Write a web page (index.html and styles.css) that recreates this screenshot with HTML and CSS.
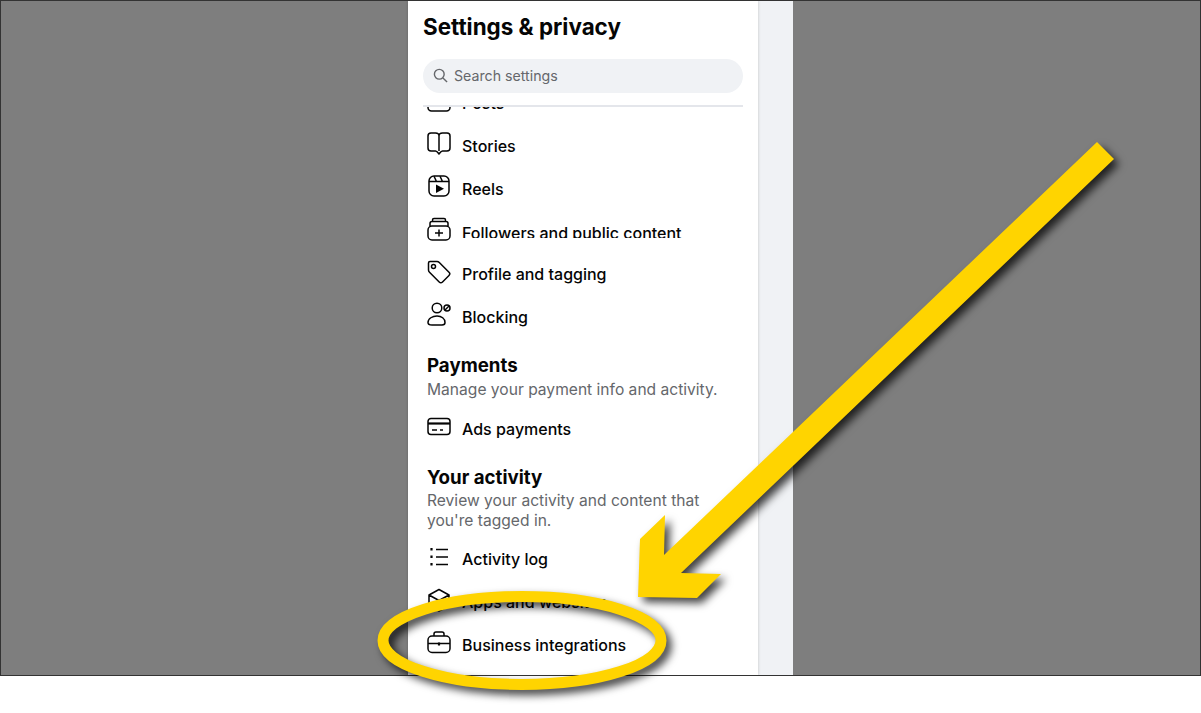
FILE: index.html
```html
<!DOCTYPE html>
<html lang="en">
<head>
    <meta charset="UTF-8">
    <title>Settings &amp; privacy</title>
    <link rel="stylesheet" href="styles.css">
</head>
<body>
    <div class="page">
        <div class="shot">
            <div class="phone">
                <div class="panel">
                    <!-- Fixed header -->
                    <div class="panel-head">
                        <h1>Settings &amp; privacy</h1>
                        <div class="search">
                            <svg class="search-icon" viewBox="0 0 16 16"><circle cx="6.7" cy="6.7" r="5.2"/><path d="M10.6 10.6 15 15"/></svg>
                            <span>Search settings</span>
                        </div>
                        <div class="divider"></div>
                    </div>

                    <!-- Scrolled list -->
                    <div class="list">
                        <div class="row first-row">
                            <svg class="icon" viewBox="0 0 24 24"><rect x="1" y="2" width="22" height="20" rx="3.5"/></svg>
                            <span>Posts</span>
                        </div>
                        <div class="row">
                            <svg class="icon" viewBox="0 0 24 24"><path d="M12 5C12 3 10.500 2 8.500 2H4C2 2 1 3 1 5V17C1 19 2 20 4 20H8.500C10 20 10.500 21 12 23C13.500 21 14 20 15.500 20H20C22 20 23 19 23 17V5C23 3 22 2 20 2H15.500C13.500 2 12 3 12 5V20"/></svg>
                            <span>Stories</span>
                        </div>
                        <div class="row">
                            <svg class="icon" viewBox="0 0 24 24"><rect x="2" y="2" width="20" height="20" rx="5"/><path d="M2 7.500H22M7 2.200 9.500 7.500M13 2.200 15.500 7.500"/><path class="solid" d="M9 10.500 17 14.700 9 19Z"/></svg>
                            <span>Reels</span>
                        </div>
                        <div class="row">
                            <svg class="icon" viewBox="0 0 24 24"><rect x="1" y="9" width="22" height="14" rx="4"/><path d="M3 9V6.500C3 5 4 4.500 5 4.500H19C20 4.500 21 5 21 6.500V9M5.500 4.500V3C5.500 2 6 1.500 7 1.500H17C18 1.500 18.500 2 18.500 3V4.500M12 12.500V19.500M8 16H16"/></svg>
                            <span class="cut-text">Followers and public content</span>
                        </div>
                        <div class="row">
                            <svg class="icon" viewBox="0 0 24 24"><path d="M3 1.500H10C11 1.500 11.700 1.900 12.300 2.500L22 12.200C23 13.200 23 14.500 22 15.500L15.500 22C14.500 23 13.200 23 12.200 22L2.500 12.300C1.900 11.700 1.500 11 1.500 10V3C1.500 2 2 1.500 3 1.500Z"/><circle cx="6.500" cy="6.500" r="2"/></svg>
                            <span>Profile and tagging</span>
                        </div>
                        <div class="row">
                            <svg class="icon" viewBox="0 0 24 24"><circle cx="10" cy="6" r="4.800"/><path d="M5 23H15C17 23 18 22 18 20.500C18 16.500 14.500 14 10 14C5.500 14 1 16.500 1 20.500C1 22 3 23 5 23Z"/><circle cx="20" cy="6" r="3"/><path d="M18 8 22 4"/></svg>
                            <span>Blocking</span>
                        </div>

                        <h2 class="section-title">Payments</h2>
                        <p class="section-note">Manage your payment info and activity.</p>
                        <div class="row ads-row">
                            <svg class="icon" viewBox="0 0 24 24"><rect x="1" y="3.500" width="22" height="16" rx="3"/><path class="thick" d="M1 8.500H23"/><path d="M5 15H10M13 15H16"/></svg>
                            <span>Ads payments</span>
                        </div>

                        <h2 class="section-title">Your activity</h2>
                        <p class="section-note">Review your activity and content that you're tagged in.</p>
                        <div class="row log-row">
                            <svg class="icon" viewBox="0 0 24 24"><path class="thick" d="M4.500 3V5.500M4.500 10.500V13M4.500 18V20.500"/><path d="M9 4.500H21M9 12H21M9 19.500H21"/></svg>
                            <span>Activity log</span>
                        </div>
                        <div class="row">
                            <svg class="icon" viewBox="0 0 24 24"><path d="M12 1.500 22 7V18L12 23 2 18V7ZM2 7 12 12.500 22 7M12 12.500V23"/></svg>
                            <span>Apps and websites</span>
                        </div>
                        <div class="row">
                            <svg class="icon" viewBox="0 0 24 24"><rect x="1" y="6" width="22" height="16.500" rx="4"/><path d="M7 6V4C7 2.800 7.800 2 9 2H15C16.200 2 17 2.800 17 4V6M1 13.500H23"/><path class="thick" d="M12 12.500V15.500"/></svg>
                            <span>Business integrations</span>
                        </div>
                    </div>
                </div>
                <div class="gutter"></div>
            </div>
        </div>

        <!-- Arrow and ring drawn on top of the screenshot -->
        <svg class="markup" viewBox="0 0 1201 713">
            <ellipse class="ring" cx="522" cy="640.500" rx="139" ry="44"/>
            <polygon class="arrow" points="1097,142 1114,159 681,573 721,574 697,598 638,597 640,539 665,515 664,555"/>
        </svg>
    </div>
</body>
</html>
```

FILE: styles.css
```css
html, body {
    margin: 0;
    height: 100%;
    overflow: hidden;
    background-color: white;
}

* {
    box-sizing: border-box;
}

.page {
    position: relative;
    height: 713px;
    font-family: Inter, "Liberation Sans", sans-serif;
    color: #050505;
}

.shot {
    height: 676px;
    border: 1px solid #333;
    background-color: #7e7e7e;
    display: flex;
    justify-content: center;
    overflow: hidden;
}

.phone {
    width: 385px;
    display: flex;
    background-color: #f0f2f5;
}

.panel {
    width: 350px;
    background-color: white;
    box-shadow: 0 0 3px rgba(0, 0, 0, 0.2);
    display: flex;
    flex-direction: column;
}

.gutter {
    flex: 1;
}

/* Header */
.panel-head {
    padding: 12px 15px 0;
}

.panel-head h1 {
    margin: 0;
    font-size: 22.4px;
    line-height: 28px;
    font-weight: 700;
}

.search {
    margin-top: 18px;
    height: 34px;
    border-radius: 17px;
    background-color: #f0f2f5;
    color: #65676b;
    font-size: 14.2px;
    display: flex;
    align-items: center;
    gap: 6px;
    padding: 0 0 2px 10px;
}

.search-icon {
    width: 15px;
    height: 15px;
    fill: none;
    stroke: #65676b;
    stroke-width: 1.5;
}

.divider {
    margin-top: 12px;
    height: 2px;
    background-color: #e4e6eb;
}

/* List */
.list {
    flex: 1;
    min-height: 0;
    overflow: hidden;
    padding: 0 19px;
}

.row {
    height: 42.75px;
    display: flex;
    align-items: center;
    gap: 11px;
    font-size: 16px;
    font-weight: 450;
}

.first-row {
    margin-top: -25.25px;
}

.ads-row {
    margin: 8px 0 -1px;
}

.log-row {
    margin-top: 7px;
}

.cut-text {
    height: 15px;
    line-height: 20px;
    overflow: hidden;
    margin-top: -1px;
}

.icon {
    width: 24px;
    height: 24px;
    flex-shrink: 0;
    margin-bottom: 5px;
    fill: none;
    stroke: #050505;
    stroke-width: 1.5;
    stroke-linejoin: round;
}

.icon .solid {
    fill: #050505;
    stroke: none;
}

.icon .thick {
    stroke-width: 2.2;
}

.section-title {
    margin: 16px 0 1.5px;
    font-size: 18.7px;
    line-height: 24px;
    font-weight: 700;
}

.section-note {
    margin: 0;
    font-size: 15.6px;
    line-height: 20px;
    color: #65676b;
}

/* Markup */
.markup {
    position: absolute;
    top: 0;
    left: 0;
    width: 1201px;
    height: 713px;
    filter: drop-shadow(5px 5px 4px rgba(0, 0, 0, 0.75));
}

.ring {
    fill: none;
    stroke: #ffd400;
    stroke-width: 11;
}

.arrow {
    fill: #ffd400;
}
```
